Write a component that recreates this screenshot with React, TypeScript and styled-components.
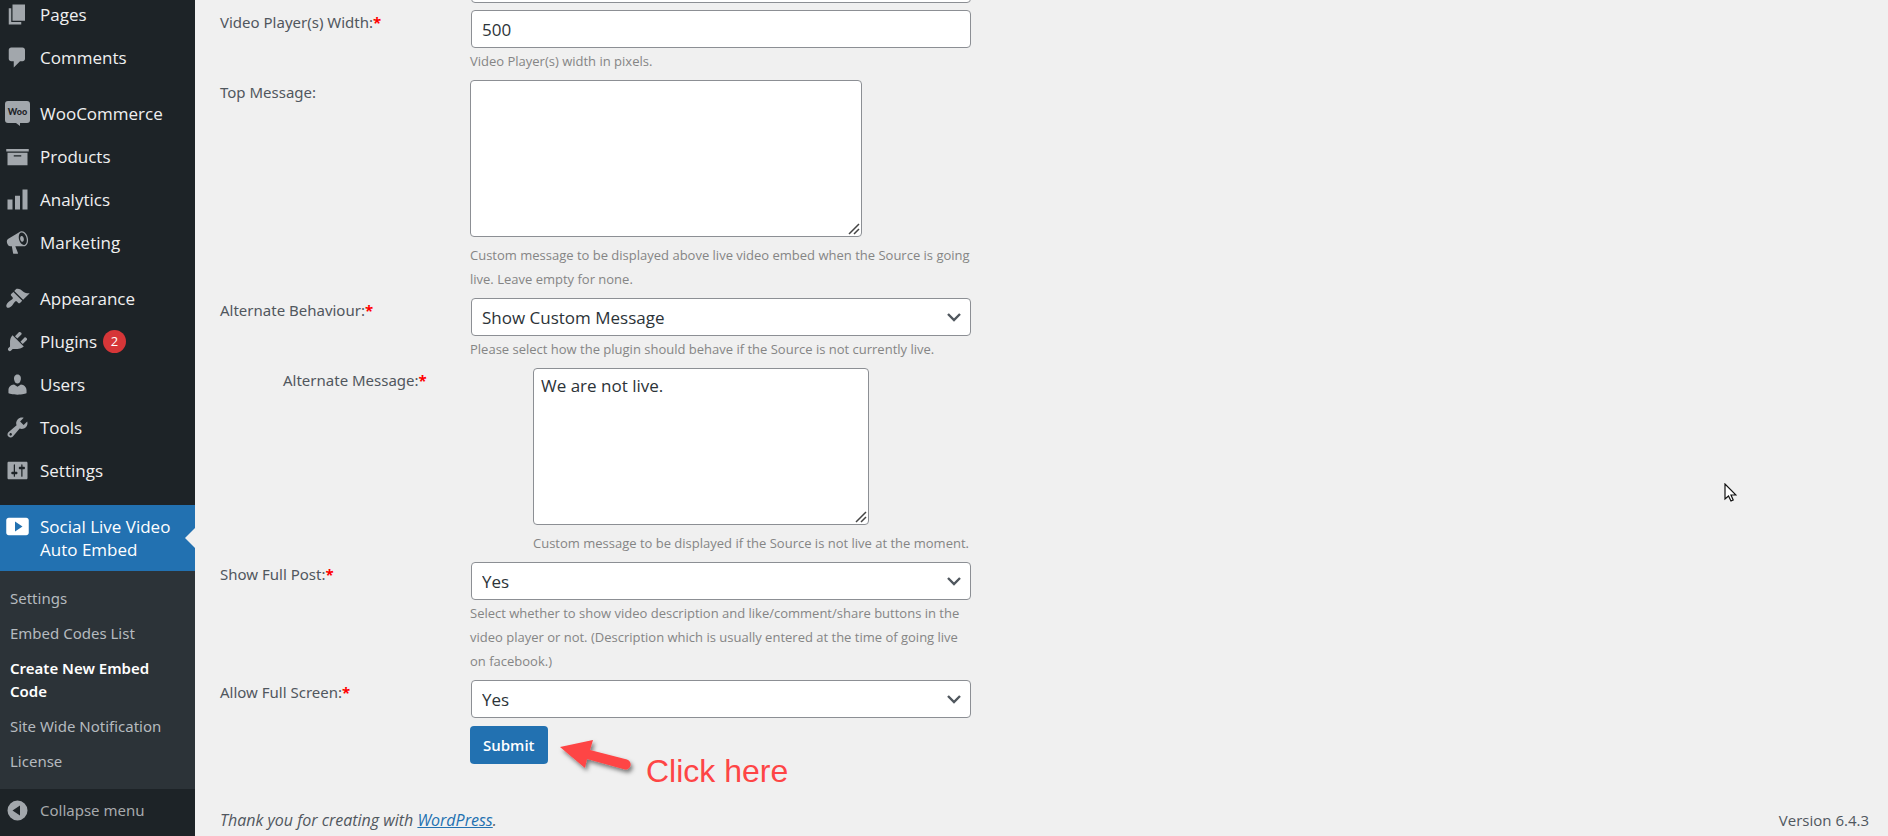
import React from "react";
import styled, { createGlobalStyle, css } from "styled-components";

const GlobalStyle = createGlobalStyle`
  *, *::before, *::after { box-sizing: border-box; }
  body {
    margin: 0;
    background: #f0f0f0;
    color: #3c434a;
    font-family: "Open Sans", "Noto Sans", sans-serif;
    font-size: 15px;
    line-height: 24px;
  }
  ul { margin: 0; padding: 0; list-style: none; }
`;

const Page = styled.div`
  display: flex;
  min-height: 100vh;
  overflow: hidden;
`;

/* ---------- sidebar ---------- */

const Sidebar = styled.aside`
  flex: none;
  width: 195px;
  background: #1d2327;
`;

const Menu = styled.ul`
  margin-top: -7px;
`;

const MenuItem = styled.li<{ $spaced?: boolean }>`
  margin-top: ${(p) => (p.$spaced ? 13 : 0)}px;
`;

const MenuLink = styled.a<{ $active?: boolean }>`
  position: relative;
  display: flex;
  align-items: flex-start;
  gap: 10px;
  padding: 10px 8px 10px 5px;
  color: #f0f0f1;
  font-size: 17px;
  line-height: 23px;
  text-decoration: none;
  ${(p) =>
    p.$active &&
    css`
      background: #2271b1;
      color: #fff;
      &::after {
        content: "";
        position: absolute;
        right: 0;
        top: 23px;
        border: 10px solid transparent;
        border-left-width: 0;
        border-right-color: #f0f0f0;
      }
    `}
`;

const Icon = styled.svg<{ $active?: boolean }>`
  flex: none;
  width: 25px;
  height: 25px;
  margin: -1px 0;
  fill: ${(p) => (p.$active ? "#fff" : "#a2a7ac")};
`;

const Count = styled.span`
  display: inline-block;
  width: 23px;
  margin-left: 6px;
  border-radius: 12px;
  background: #d63638;
  color: #fff;
  font-size: 13px;
  text-align: center;
  vertical-align: top;
`;

const SubMenu = styled.ul`
  padding: 10px 0;
  background: #2c3338;
`;

const SubLink = styled.a<{ $current?: boolean }>`
  display: block;
  padding: 6px 10px;
  color: ${(p) => (p.$current ? "#fff" : "#b5babf")};
  font-family: "Noto Sans", sans-serif;
  font-size: 15px;
  font-weight: ${(p) => (p.$current ? 600 : 400)};
  line-height: 23px;
  text-decoration: none;
`;

const Collapse = styled.button`
  display: flex;
  align-items: center;
  gap: 10px;
  width: 100%;
  padding: 10px 8px 10px 5px;
  border: 0;
  background: none;
  color: #a7aaad;
  font-family: "Noto Sans", sans-serif;
  font-size: 15px;
  line-height: 23px;
  text-align: left;
`;

/* ---------- content ---------- */

const Main = styled.main`
  position: relative;
  flex: 1;
  min-width: 0;
  display: flex;
  flex-direction: column;
  padding: 0 19px 4px 25px;
`;

const Form = styled.form`
  display: flex;
  flex-direction: column;
  gap: 7px;
  max-width: 751px;
  margin-top: -35px;
`;

const Row = styled.div<{ $nested?: boolean }>`
  display: grid;
  grid-template-columns: 250px minmax(0, 1fr);
  padding-left: ${(p) => (p.$nested ? 63 : 0)}px;
`;

const Label = styled.label`
  color: #50575e;
  font-family: "Noto Sans", sans-serif;
`;

const Required = styled.span`
  color: #f00;
  font-weight: 700;
`;

const Field = styled.div`
  grid-column: 2;
  display: flex;
  flex-direction: column;
  align-items: flex-start;
`;

const control = css`
  border: 1px solid #8c8f94;
  border-radius: 4px;
  background: #fff;
  color: #2c3338;
  font-family: inherit;
  font-size: 17px;
`;

const TextInput = styled.input`
  ${control}
  align-self: stretch;
  height: 38px;
  margin-left: 1px;
  padding: 1px 10px 0;
`;

const SelectBox = styled.div`
  position: relative;
  align-self: stretch;
  display: flex;
  margin-left: 1px;
`;

const Select = styled.select`
  ${control}
  flex: 1;
  height: 38px;
  padding: 1px 32px 0 10px;
  appearance: none;
`;

const Chevron = styled.svg`
  position: absolute;
  right: 10px;
  top: 12px;
  width: 14px;
  height: 14px;
  fill: none;
  stroke: #50575e;
  stroke-width: 2.4;
  pointer-events: none;
`;

const TextArea = styled.textarea<{ $width: number }>`
  ${control}
  width: ${(p) => p.$width}px;
  max-width: 100%;
  height: 157px;
  margin-bottom: 5px;
  padding: 5px 7px;
  line-height: 24px;
  resize: both;

  &::-webkit-resizer {
    background: url("data:image/svg+xml,%3Csvg xmlns='http://www.w3.org/2000/svg' width='15' height='15'%3E%3Cpath d='M3 13L13 3M8 13l5-5' stroke='%23444' stroke-width='1.5'/%3E%3C/svg%3E")
      no-repeat;
  }
`;

const Hint = styled.p`
  margin: 1px 0 0;
  color: #858585;
  font-size: 13px;
  line-height: 24px;
`;

const SubmitArea = styled.div`
  position: relative;
  margin: 1px 0 0 250px;
`;

const Submit = styled.button`
  display: block;
  height: 38px;
  padding: 0 13px;
  border: 0;
  border-radius: 4px;
  background: #2271b1;
  color: #fff;
  font-family: inherit;
  font-size: 15px;
  font-weight: 600;
`;

const Callout = styled.div`
  position: absolute;
  left: 86px;
  top: 8px;
  display: flex;
  gap: 8px;
  color: #fe4545;
  font: 32px/36px "Liberation Sans", Arial, sans-serif;
  white-space: nowrap;
`;

const CalloutText = styled.span`
  padding-top: 19px;
`;

const Footer = styled.footer`
  display: flex;
  justify-content: space-between;
  margin-top: auto;
  padding-top: 44px;
  color: #50575e;
`;

const Thanks = styled.em`
  font-size: 16px;
`;

const FooterLink = styled.a`
  color: #2271b1;
`;

const Pointer = styled.svg`
  position: absolute;
  right: 151px;
  top: 483px;
  width: 13px;
  height: 19px;
`;

const paths: Record<string, string> = {
  pages: "M6 15V2h10v13H6zm-1 1h8v2H3V5h2v11z",
  comments:
    "M5 2h9c1.1 0 2 .9 2 2v7c0 1.1-.9 2-2 2h-2l-5 5v-5H5c-1.1 0-2-.9-2-2V4c0-1.1.9-2 2-2z",
  products: "M19 4v2H1V4h18zM2 7h16v10H2V7zm11 3V9H7v1h6z",
  analytics: "M18 18V2h-4v16h4zm-6 0V7H8v11h4zm-6 0v-8H2v8h4z",
  marketing:
    "M18.15 5.94c.46 1.62.38 3.22-.02 4.48-.42 1.28-1.26 2.18-2.3 2.48-.16.06-.26.06-.4.06-.06.02-.12.02-.18.02-.06.02-.14.02-.22.02h-6.8l2.22 5.5c.02.14-.06.26-.14.34-.08.1-.24.16-.34.16H6.95c-.1 0-.26-.06-.34-.16-.08-.08-.16-.2-.14-.34l-1-5.5H4.25l-.02-.02c-.5.06-1.08-.18-1.54-.62s-.88-1.08-1.06-1.88c-.24-.8-.2-1.56-.02-2.2.18-.62.58-1.08 1.06-1.3l.02-.02 9-5.4c.1-.06.18-.1.24-.16.06-.04.14-.08.24-.12.16-.08.28-.12.5-.18 1.04-.3 2.24.1 3.22.98s1.84 2.24 2.26 3.86zm-2.58 5.98h-.02c.4-.1.74-.34 1.04-.7.58-.7.86-1.76.86-3.04 0-.64-.1-1.3-.28-1.98-.34-1.36-1.02-2.5-1.78-3.24s-1.68-1.1-2.46-.88c-.82.22-1.4.96-1.7 2-.32 1.04-.28 2.36.06 3.72.38 1.36 1 2.5 1.8 3.24.78.74 1.62 1.1 2.48.88zm-2.54-7.08c.22-.04.42-.02.62.04.38.16.76.48 1.02 1s.42 1.2.42 1.78c0 .3-.04.56-.12.8-.18.48-.44.84-.86.94-.34.1-.8-.06-1.14-.4s-.64-.86-.78-1.5c-.18-.62-.12-1.24.02-1.72s.48-.84.82-.94z",
  appearance:
    "M14.48 11.06L7.41 3.99l1.5-1.5c.5-.56 2.3-.47 3.51.32 1.21.8 1.43 1.28 2.91 2.1 1.18.64 2.45 1.26 4.45.85zm-.71.71L6.7 4.7 4.93 6.47c-.39.39-.39 1.02 0 1.41l1.06 1.06c.39.39.39 1.03 0 1.42-.6.6-1.43 1.11-2.21 1.69-.35.26-.7.53-1.01.84C1.43 14.23.4 16.08 1.4 17.07c.99 1 2.84-.03 4.18-1.36.31-.31.58-.66.85-1.02.57-.78 1.08-1.61 1.69-2.21.39-.39 1.02-.39 1.41 0l1.06 1.06c.39.39 1.02.39 1.41 0z",
  plugins:
    "M13.11 4.36L9.87 7.6 8 5.73l3.24-3.24c.35-.34 1.05-.2 1.56.32.52.51.66 1.21.31 1.55zm-8 1.77l.91-1.12 9.01 9.01-1.19.84c-.71.71-2.63 1.16-3.82 1.16H6.14L4.9 17.26c-.59.59-1.54.59-2.12 0-.59-.58-.59-1.53 0-2.12l1.24-1.24v-3.88c0-1.13.4-3.19 1.09-3.89zm7.26 3.97l3.24-3.24c.34-.35 1.04-.21 1.55.31.52.51.66 1.21.31 1.55l-3.24 3.25z",
  users:
    "M10 9.25c-2.27 0-2.73-3.44-2.73-3.44C7 4.02 7.82 2 9.97 2c2.16 0 2.98 2.02 2.71 3.81 0 0-.41 3.44-2.68 3.44zm0 2.57L12.72 10c2.39 0 4.52 2.33 4.52 4.53v2.49s-3.65 1.13-7.24 1.13c-3.65 0-7.24-1.13-7.24-1.13v-2.49c0-2.25 1.94-4.48 4.47-4.48z",
  tools:
    "M16.68 9.77c-1.34 1.34-3.3 1.67-4.95.99l-5.41 6.52c-.99.99-2.59.99-3.58 0s-.99-2.59 0-3.57l6.52-5.42c-.68-1.65-.35-3.61.99-4.95 1.28-1.28 3.12-1.62 4.72-1.06l-2.89 2.89 2.82 2.82 2.86-2.87c.53 1.58.18 3.39-1.08 4.65zM3.81 16.21c.4.39 1.04.39 1.43 0 .4-.4.4-1.04 0-1.43-.39-.4-1.03-.4-1.43 0-.39.39-.39 1.03 0 1.43z",
  settings:
    "M18 16V4c0-.55-.45-1-1-1H3c-.55 0-1 .45-1 1v12c0 .55.45 1 1 1h14c.55 0 1-.45 1-1zM8 11h1c.55 0 1 .45 1 1s-.45 1-1 1H8v1.5c0 .28-.22.5-.5.5s-.5-.22-.5-.5V13H6c-.55 0-1-.45-1-1s.45-1 1-1h1V5.5c0-.28.22-.5.5-.5s.5.22.5.5V11zm5-2h-1c-.55 0-1-.45-1-1s.45-1 1-1h1V5.5c0-.28.22-.5.5-.5s.5.22.5.5V7h1c.55 0 1 .45 1 1s-.45 1-1 1h-1v5.5c0 .28-.22.5-.5.5s-.5-.22-.5-.5V9z",
  video:
    "M19 15V5c0-1.1-.9-2-2-2H3c-1.1 0-2 .9-2 2v10c0 1.1.9 2 2 2h14c1.1 0 2-.9 2-2zM8 14V6l6 4z",
};

function WooIcon() {
  return (
    <Icon viewBox="0 0 25 25" aria-hidden="true">
      <path d="M3 0h19a3 3 0 0 1 3 3v16a3 3 0 0 1-3 3h-7v3l-4-3H3a3 3 0 0 1-3-3V3a3 3 0 0 1 3-3z" />
      <text
        x="12.5"
        y="14"
        textAnchor="middle"
        fill="#1d2327"
        fontFamily="Lato, sans-serif"
        fontSize="9"
        fontWeight="900"
      >
        Woo
      </text>
    </Icon>
  );
}

type Item = { label: string; icon: string; spaced?: boolean; count?: number };

const items: Item[] = [
  { label: "Pages", icon: "pages" },
  { label: "Comments", icon: "comments" },
  { label: "WooCommerce", icon: "woo", spaced: true },
  { label: "Products", icon: "products" },
  { label: "Analytics", icon: "analytics" },
  { label: "Marketing", icon: "marketing" },
  { label: "Appearance", icon: "appearance", spaced: true },
  { label: "Plugins", icon: "plugins", count: 2 },
  { label: "Users", icon: "users" },
  { label: "Tools", icon: "tools" },
  { label: "Settings", icon: "settings" },
];

const subItems = [
  "Settings",
  "Embed Codes List",
  "Create New Embed Code",
  "Site Wide Notification",
  "License",
];

function SelectField({ id, options }: { id: string; options: string[] }) {
  return (
    <SelectBox>
      <Select id={id}>
        {options.map((o) => (
          <option key={o}>{o}</option>
        ))}
      </Select>
      <Chevron viewBox="0 0 14 14" aria-hidden="true">
        <path d="M1 4l6 6 6-6" />
      </Chevron>
    </SelectBox>
  );
}

function FieldRow(props: {
  id: string;
  label: string;
  required?: boolean;
  nested?: boolean;
  hint?: string;
  children: React.ReactNode;
}) {
  return (
    <Row $nested={props.nested}>
      <Label htmlFor={props.id}>
        {props.label}
        {props.required && <Required>*</Required>}
      </Label>
      <Field>
        {props.children}
        {props.hint && <Hint>{props.hint}</Hint>}
      </Field>
    </Row>
  );
}

export default function App() {
  return (
    <Page>
      <GlobalStyle />
      <Sidebar>
        <Menu>
          {items.map((item) => (
            <MenuItem key={item.label} $spaced={item.spaced}>
              <MenuLink href="#">
                {item.icon === "woo" ? (
                  <WooIcon />
                ) : (
                  <Icon viewBox="0 0 20 20" aria-hidden="true">
                    <path d={paths[item.icon]} />
                  </Icon>
                )}
                <span>
                  {item.label}
                  {item.count && <Count>{item.count}</Count>}
                </span>
              </MenuLink>
            </MenuItem>
          ))}
          <MenuItem $spaced>
            <MenuLink href="#" $active>
              <Icon viewBox="0 0 20 20" $active aria-hidden="true">
                <path d={paths.video} />
              </Icon>
              <span>Social Live Video Auto Embed</span>
            </MenuLink>
            <SubMenu>
              {subItems.map((label) => (
                <li key={label}>
                  <SubLink href="#" $current={label === "Create New Embed Code"}>
                    {label}
                  </SubLink>
                </li>
              ))}
            </SubMenu>
          </MenuItem>
        </Menu>
        <Collapse type="button">
          <Icon viewBox="0 0 20 20" aria-hidden="true">
            <path
              fillRule="evenodd"
              d="M10 2a8 8 0 1 1 0 16 8 8 0 0 1 0-16zM12 6l-6 4 6 4z"
            />
          </Icon>
          Collapse menu
        </Collapse>
      </Sidebar>

      <Main>
        <Form onSubmit={(e) => e.preventDefault()}>
          <Row>
            <Field>
              <TextInput type="text" aria-label="Previous option" />
            </Field>
          </Row>
          <FieldRow
            id="width"
            label="Video Player(s) Width:"
            required
            hint="Video Player(s) width in pixels."
          >
            <TextInput id="width" type="text" defaultValue="500" />
          </FieldRow>
          <FieldRow
            id="top"
            label="Top Message:"
            hint="Custom message to be displayed above live video embed when the Source is going live. Leave empty for none."
          >
            <TextArea id="top" $width={392} />
          </FieldRow>
          <FieldRow
            id="behaviour"
            label="Alternate Behaviour:"
            required
            hint="Please select how the plugin should behave if the Source is not currently live."
          >
            <SelectField id="behaviour" options={["Show Custom Message"]} />
          </FieldRow>
          <FieldRow
            id="alternate"
            label="Alternate Message:"
            required
            nested
            hint="Custom message to be displayed if the Source is not live at the moment."
          >
            <TextArea id="alternate" $width={336} defaultValue="We are not live." />
          </FieldRow>
          <FieldRow
            id="post"
            label="Show Full Post:"
            required
            hint="Select whether to show video description and like/comment/share buttons in the video player or not. (Description which is usually entered at the time of going live on facebook.)"
          >
            <SelectField id="post" options={["Yes", "No"]} />
          </FieldRow>
          <FieldRow id="screen" label="Allow Full Screen:" required>
            <SelectField id="screen" options={["Yes", "No"]} />
          </FieldRow>
          <SubmitArea>
            <Submit type="submit">Submit</Submit>
            <Callout>
              <svg width="82" height="48" viewBox="0 0 82 48" aria-hidden="true">
                <defs>
                  <filter id="shade" x="-20%" y="-20%" width="150%" height="160%">
                    <feDropShadow
                      dx="2"
                      dy="3"
                      stdDeviation="2"
                      floodColor="#000"
                      floodOpacity="0.5"
                    />
                  </filter>
                </defs>
                <path
                  filter="url(#shade)"
                  fill="currentColor"
                  d="M4 13L37 6l-3 10 37 9.500a5 5 0 0 1-3 9.800L31 25l-2 9z"
                />
              </svg>
              <CalloutText>Click here</CalloutText>
            </Callout>
          </SubmitArea>
        </Form>
        <Footer>
          <Thanks>
            Thank you for creating with <FooterLink href="#">WordPress</FooterLink>.
          </Thanks>
          <span>Version 6.4.3</span>
        </Footer>
        <Pointer viewBox="0 0 13 19" aria-hidden="true">
          <path
            d="M1 1v15l3.500-3 2.500 5 2.200-1-2.200-5H12z"
            fill="#fff"
            stroke="#111"
            strokeWidth="1.200"
          />
        </Pointer>
      </Main>
    </Page>
  );
}
